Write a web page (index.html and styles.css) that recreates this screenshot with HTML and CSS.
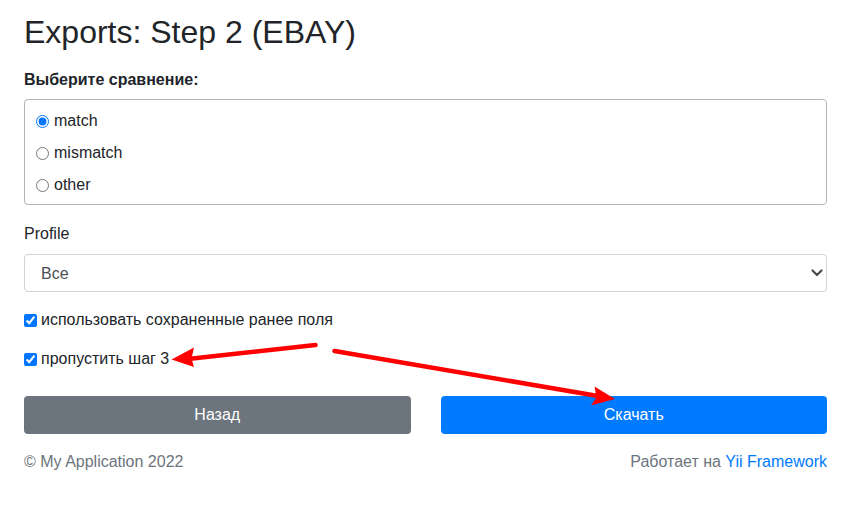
FILE: index.html
```html
<!DOCTYPE html>
<html lang="ru">
<head>
<meta charset="utf-8">
<title>Exports: Step 2 (EBAY)</title>
<link rel="stylesheet" href="styles.css">
</head>
<body>
<main class="page">
  <h1 class="title">Exports: Step 2 (EBAY)</h1>
  <form class="form">
    <div class="group">
      <div class="group-label">Выберите сравнение:</div>
      <div class="radio-box">
        <label class="radio-row"><input type="radio" name="cmp" value="match" checked><span>match</span></label>
        <label class="radio-row"><input type="radio" name="cmp" value="mismatch"><span>mismatch</span></label>
        <label class="radio-row"><input type="radio" name="cmp" value="other"><span>other</span></label>
      </div>
    </div>

    <div class="group profile-group">
      <label class="field-label" for="profile">Profile</label>
      <div class="select-wrap">
        <select id="profile" class="select">
          <option>Все</option>
        </select>
        <svg class="chevron" width="12" height="8" viewBox="0 0 12 8"><path d="M1.5 1.5 L6 6 L10.5 1.5" fill="none" stroke="#4a4a4a" stroke-width="2.2" stroke-linecap="round" stroke-linejoin="round"/></svg>
      </div>
    </div>

    <label class="check-row first-check"><input type="checkbox" checked><span>использовать сохраненные ранее поля</span></label>
    <label class="check-row second-check"><input type="checkbox" checked><span>пропустить шаг 3</span></label>

    <div class="buttons">
      <button type="button" class="btn btn-secondary">Назад</button>
      <button type="button" class="btn btn-primary">Скачать</button>
    </div>
  </form>

  <footer class="footer">
    <span>© My Application 2022</span>
    <span>Работает на <a href="#" class="link">Yii Framework</a></span>
  </footer>
</main>

<svg class="annotations" width="848" height="532" viewBox="0 0 848 532">
  <line x1="315.5" y1="345" x2="188" y2="359" stroke="#ff0000" stroke-width="4.5" stroke-linecap="round"/>
  <polygon points="171.5,359.5 194,347.5 191.5,358.5 194,367" fill="#ff0000"/>
  <line x1="334.5" y1="351" x2="598" y2="396" stroke="#ff0000" stroke-width="4.5" stroke-linecap="round"/>
  <polygon points="615,399 594.5,386.5 596.5,397.5 591,405.5" fill="#ff0000"/>
</svg>
</body>
</html>
```

FILE: styles.css
```css
html, body {
  margin: 0;
  padding: 0;
  background: #ffffff;
}

body {
  font-family: "Liberation Sans", Arial, sans-serif;
  font-size: 16px;
  line-height: 24px;
  color: #212529;
  position: relative;
  width: 848px;
  height: 532px;
  overflow: hidden;
}

.page {
  width: 803px;
  margin-left: 24px;
  padding-top: 13px;
}

.title {
  font-size: 32px;
  line-height: 38px;
  font-weight: normal;
  margin: 0 0 17px;
  color: #212529;
}

.form {
  display: flex;
  flex-direction: column;
}

.group-label {
  font-weight: bold;
  margin-bottom: 7px;
}

.radio-box {
  border: 1px solid #b4b4b4;
  border-radius: 4px;
  padding: 9px 11px 7px;
  display: flex;
  flex-direction: column;
  gap: 8px;
}

.radio-row {
  display: flex;
  align-items: center;
  gap: 5px;
  height: 24px;
}

.radio-row input {
  margin: 0;
  width: 13px;
  height: 13px;
}

.profile-group {
  margin-top: 17px;
}

.field-label {
  display: block;
  margin-bottom: 8px;
}

.select-wrap {
  position: relative;
}

.select {
  display: block;
  width: 100%;
  height: 38px;
  box-sizing: border-box;
  border: 1px solid #ced4da;
  border-radius: 4px;
  padding: 0 30px 0 16px;
  font-family: "Liberation Sans", Arial, sans-serif;
  font-size: 16px;
  color: #495057;
  background: #ffffff;
  appearance: none;
  -webkit-appearance: none;
}

.chevron {
  position: absolute;
  right: 4px;
  top: 15px;
  pointer-events: none;
}

.check-row {
  display: flex;
  align-items: center;
  gap: 4px;
  height: 24px;
}

.check-row input {
  margin: 0;
  width: 13px;
  height: 13px;
}

.first-check {
  margin-top: 16px;
}

.second-check {
  margin-top: 15px;
}

.buttons {
  margin-top: 25px;
  display: grid;
  grid-template-columns: 1fr 1fr;
  column-gap: 30px;
}

.btn {
  height: 38px;
  border: none;
  border-radius: 4px;
  font-family: "Liberation Sans", Arial, sans-serif;
  font-size: 16px;
  line-height: 24px;
  color: #ffffff;
  padding: 0;
}

.btn-secondary {
  background: #6c757d;
}

.btn-primary {
  background: #007bff;
}

.footer {
  margin-top: 16px;
  display: flex;
  justify-content: space-between;
  color: #6c757d;
}

.link {
  color: #007bff;
  text-decoration: none;
}

.annotations {
  position: absolute;
  left: 0;
  top: 0;
  pointer-events: none;
}
```
